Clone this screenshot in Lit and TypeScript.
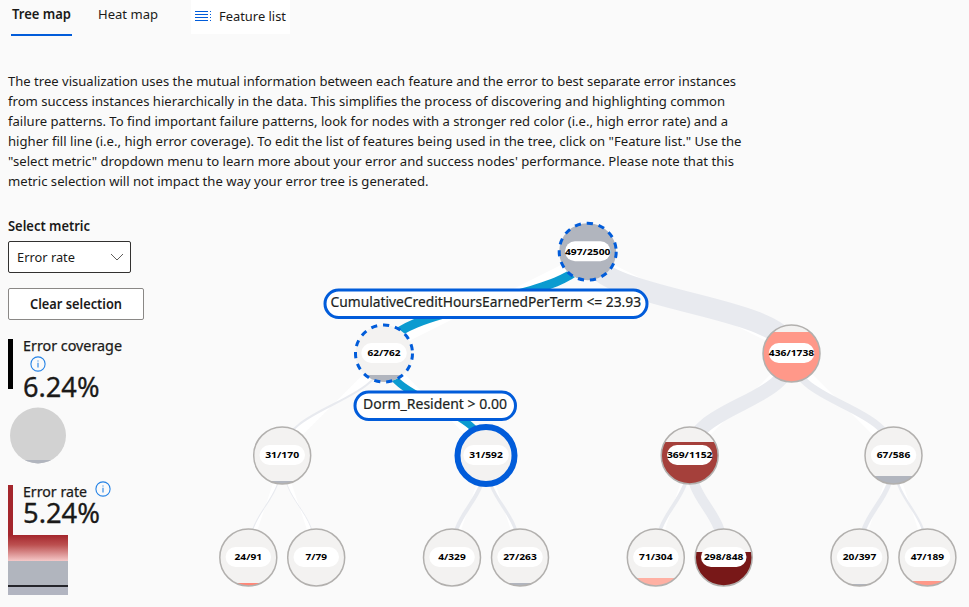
import { LitElement, html, css, svg } from "lit";
import { customElement } from "lit/decorators.js";

interface TreeNode {
  x: number; y: number; label: string; w: number;
  size: number; fill?: string; top?: number; parent?: number; state?: "path" | "selected";
}

const GREY = "#b1b5be";
const NODES: TreeNode[] = [
  { x: 587.7, y: 251.7, label: "497/2500", w: 45.5, size: 2500, fill: GREY, top: 220, state: "path" },
  { x: 384, y: 353.5, label: "62/762", w: 33, size: 762, fill: GREY, top: 375, parent: 0, state: "path" },
  { x: 791.5, y: 353.5, label: "436/1738", w: 45.5, size: 1738, fill: "#ff9889", top: 332, parent: 0 },
  { x: 282.2, y: 455.5, label: "31/170", w: 34, size: 170, fill: GREY, top: 481, parent: 1 },
  { x: 486, y: 455.5, label: "31/592", w: 33.5, size: 592, parent: 1, state: "selected" },
  { x: 689.7, y: 455.5, label: "369/1152", w: 45.5, size: 1152, fill: "#a5403b", top: 442, parent: 2 },
  { x: 893.5, y: 455.5, label: "67/586", w: 33.5, size: 586, fill: GREY, top: 476, parent: 2 },
  { x: 248.3, y: 557.5, label: "24/91", w: 27.5, size: 91, fill: "#ff8778", top: 583, parent: 3 },
  { x: 316.2, y: 557.5, label: "7/79", w: 21.5, size: 79, parent: 3 },
  { x: 452, y: 557.5, label: "4/329", w: 27.5, size: 329, parent: 4 },
  { x: 520, y: 557.5, label: "27/263", w: 33.5, size: 263, fill: GREY, top: 583, parent: 4 },
  { x: 655.8, y: 557.5, label: "71/304", w: 33.5, size: 304, fill: "#ffb0a3", top: 578, parent: 5 },
  { x: 723.7, y: 557.5, label: "298/848", w: 39.5, size: 848, fill: "#781818", top: 552, parent: 5 },
  { x: 859.5, y: 557.5, label: "20/397", w: 33.5, size: 397, fill: GREY, top: 584, parent: 6 },
  { x: 927.4, y: 557.5, label: "47/189", w: 33.5, size: 189, fill: "#ff9889", top: 581, parent: 6 },
];

const INTRO: [string, number][] = [
  ["The tree visualization uses the mutual information between each feature and the error to best separate error instances", 728],
  ["from success instances hierarchically in the data. This simplifies the process of discovering and highlighting common", 717],
  ["failure patterns. To find important failure patterns, look for nodes with a stronger red color (i.e., high error rate) and a", 720],
  ["higher fill line (i.e., high error coverage). To edit the list of features being used in the tree, click on \"Feature list.\" Use the", 733.5],
  ["\"select metric\" dropdown menu to learn more about your error and success nodes' performance. Please note that this", 726],
  ["metric selection will not impact the way your error tree is generated.", 420.5],
];

/** One line of text drawn at a fixed advance width. */
const line = (text: string, width: number, height: number, base: number, cls = "") => svg`
  <svg class="line ${cls}" width=${width} height=${height}>
    <text x="0" y=${base} textLength=${width} lengthAdjust="spacingAndGlyphs">${text}</text>
  </svg>`;

const info = html`<svg class="info" width="16" height="16" viewBox="0 0 16 16">
  <circle cx="8" cy="8" r="7.1" /><path d="M8 6.8V11.4M8 4.5V5.6" /></svg>`;

@customElement("error-tree")
export class ErrorTree extends LitElement {
  static styles = css`
    :host { display: block; width: 969px; height: 607px; }
    svg { display: block; }
    text { font-family: "Noto Sans", "Open Sans", sans-serif; text-anchor: middle; fill: #000; }
    .count { font-size: 9.5px; font-weight: 700; }
    .cond { font-size: 13.8px; fill: #201f1e; stroke: #201f1e; stroke-width: 0.2; }
    .edge { fill: #fff; stroke: #e8eaef; }
    .edge.on { stroke: #0b9bd0; }
    .base { fill: #f3f2f1; }
    .ring { fill: none; stroke: #b2b0ae; stroke-width: 1.5; }
    .ring.path { stroke: #015cda; stroke-width: 3; stroke-dasharray: 6.2 5.9; }
    .ring.selected { stroke: #015cda; stroke-width: 6; }
    .pill { fill: #fff; }
    .box { fill: #fff; stroke: #015cda; stroke-width: 3; }
  `;

  private edge(n: TreeNode) {
    const p = NODES[n.parent!];
    const m = (p.y + n.y) / 2;
    return svg`<path class="edge ${n.state ? "on" : ""}" stroke-width=${(30 * n.size) / 2500}
      d="M${p.x} ${p.y}C${p.x} ${m} ${n.x} ${m} ${n.x} ${n.y}" />`;
  }

  private node(n: TreeNode, i: number) {
    return svg`
      <clipPath id="c${i}"><circle cx=${n.x} cy=${n.y} r="28.5" /></clipPath>
      <circle class="base" cx=${n.x} cy=${n.y} r="28.5" />
      ${n.fill ? svg`<rect clip-path="url(#c${i})" x=${n.x - 30} y=${n.top!} width="60" height="65" fill=${n.fill} />` : ""}
      <circle class="ring ${n.state ?? ""}" cx=${n.x} cy=${n.y} r="28.5" />
      <rect class="pill" x=${n.x - 22.7} y=${n.y - 10.5} width="45.5" height="20" rx="10" />
      <text class="count" x=${n.x} y=${n.y + 2.9} textLength=${n.w} lengthAdjust="spacingAndGlyphs">${n.label}</text>`;
  }

  render() {
    return html`<svg width="969" height="607" viewBox="0 0 969 607">
      ${NODES.filter((n) => n.parent !== undefined).map((n) => this.edge(n))}
      ${NODES.map((n, i) => this.node(n, i))}
      <rect class="box" x="325" y="290" width="322" height="27.5" rx="13.7" />
      <text class="cond" x="485.8" y="307" textLength="310.5" lengthAdjust="spacingAndGlyphs">CumulativeCreditHoursEarnedPerTerm &lt;= 23.93</text>
      <rect class="box" x="355" y="392" width="160.5" height="27.5" rx="13.7" />
      <text class="cond" x="435" y="409" textLength="144" lengthAdjust="spacingAndGlyphs">Dorm_Resident &gt; 0.00</text>
    </svg>`;
  }
}

@customElement("app-root")
export class AppRoot extends LitElement {
  static styles = css`
    :host { display: block; position: relative; width: 969px; height: 607px; overflow: hidden; background: #fafafa; color: #1b1a19;
      font-family: "Noto Sans", "Open Sans", sans-serif; }
    error-tree { position: absolute; inset: 0; }
    .page { padding-left: 8px; }
    .line { display: block; overflow: visible; font-size: 13.4px; fill: #1b1a19; }
    .semi { font-weight: 600; }
    .title { font-size: 14px; stroke: #1b1a19; stroke-width: 0.25; }
    .big { font-size: 27px; stroke: #1b1a19; stroke-width: 0.3; }
    .bar { display: flex; height: 36px; align-items: flex-start; }
    .tab { box-sizing: border-box; height: 36px; padding: 4px 1px 0; margin-left: 3px; border-bottom: 2px solid #015cda; }
    .tab.off { border-color: transparent; margin-left: 25px; }
    .list { box-sizing: border-box; display: flex; gap: 8px; width: 99px; height: 34px; margin-left: 32px; padding: 6px 0 0 4px; background: #fff; }
    .list .icon { margin-top: 4px; flex: none; }
    .intro { margin-top: 35px; display: grid; grid-auto-rows: 20px; }
    .label { margin-top: 25px; height: 20px; }
    .select, .clear { box-sizing: border-box; display: flex; align-items: center; height: 32px; border-radius: 2px; background: #fff; }
    .select { width: 123px; margin-top: 5px; padding: 0 6px 0 8px; justify-content: space-between; border: 1px solid #323130; }
    .clear { width: 136px; margin-top: 15px; justify-content: center; border: 1px solid #8a8886; }
    .metric { display: flex; height: 65px; margin-top: 19px; }
    .stripe { width: 5px; height: 50px; background: #000; margin-right: 10px; }
    .red { background: #a4262c; }
    .info { display: block; fill: none; stroke: #2583e6; stroke-width: 1.1; }
    .cover .info { margin: -3px 0 0 7px; }
    .cover .big { margin-top: -1px; }
    .ball { display: block; margin: 3px 0 0 1px; }
    .rate { height: 50px; margin-top: 21px; }
    .head { display: flex; gap: 8px; height: 17px; }
    .rate .info { margin-top: -4px; }
    .scale { display: flex; flex-direction: column; width: 60px; height: 60px; background: #b1b5be; }
    .heat { height: 26px; background: linear-gradient(#a4262c, #bc5050 38%, #f5c8c8); }
    .mark { height: 2px; margin-top: 24px; background: #25252b; }
    .below { flex: 1; background: #b2b5c1; }
  `;

  render() {
    return html`
      <error-tree></error-tree>
      <div class="page">
        <div class="bar">
          <div class="tab">${line("Tree map", 59, 20, 15, "semi")}</div>
          <div class="tab off">${line("Heat map", 60, 20, 15)}</div>
          <div class="list">
            <svg class="icon" width="16" height="12" viewBox="0 0 16 12" shape-rendering="crispEdges">
              <path d="M0 1.5H13M0 4.5H13M0 7.5H13M0 10.5H13M15 1.5H16M15 4.5H16M15 7.5H16M15 10.5H16" stroke="#015cda" />
            </svg>
            ${line("Feature list", 67, 20, 15)}
          </div>
        </div>
        <div class="intro">${INTRO.map(([t, w]) => line(t, w, 20, 15))}</div>
        <div class="label">${line("Select metric", 82, 20, 15, "semi")}</div>
        <div class="select">
          ${line("Error rate", 58, 20, 15)}
          <svg width="14" height="8" viewBox="0 0 14 8"><path d="M1 1L7 7L13 1" fill="none" stroke="#605e5c" /></svg>
        </div>
        <div class="clear">${line("Clear selection", 92, 20, 15, "semi")}</div>
        <div class="metric cover">
          <div class="stripe"></div>
          <div>${line("Error coverage", 99, 20, 12, "title")}${info}${line("6.24%", 76.5, 32, 26, "big")}</div>
        </div>
        <svg class="ball" width="58" height="57" viewBox="0 0 58 57">
          <clipPath id="b"><circle cx="29" cy="28.5" r="28" /></clipPath>
          <g clip-path="url(#b)"><rect width="58" height="57" fill="#d2d2d2" /><rect y="53" width="58" height="4" fill="#b1b5be" /></g>
        </svg>
        <div class="metric rate">
          <div class="stripe red"></div>
          <div><div class="head">${line("Error rate", 64, 17, 12, "title")}${info}</div>${line("5.24%", 77, 32, 21, "big")}</div>
        </div>
        <div class="scale"><div class="heat"></div><div class="mark"></div><div class="below"></div></div>
      </div>`;
  }
}
